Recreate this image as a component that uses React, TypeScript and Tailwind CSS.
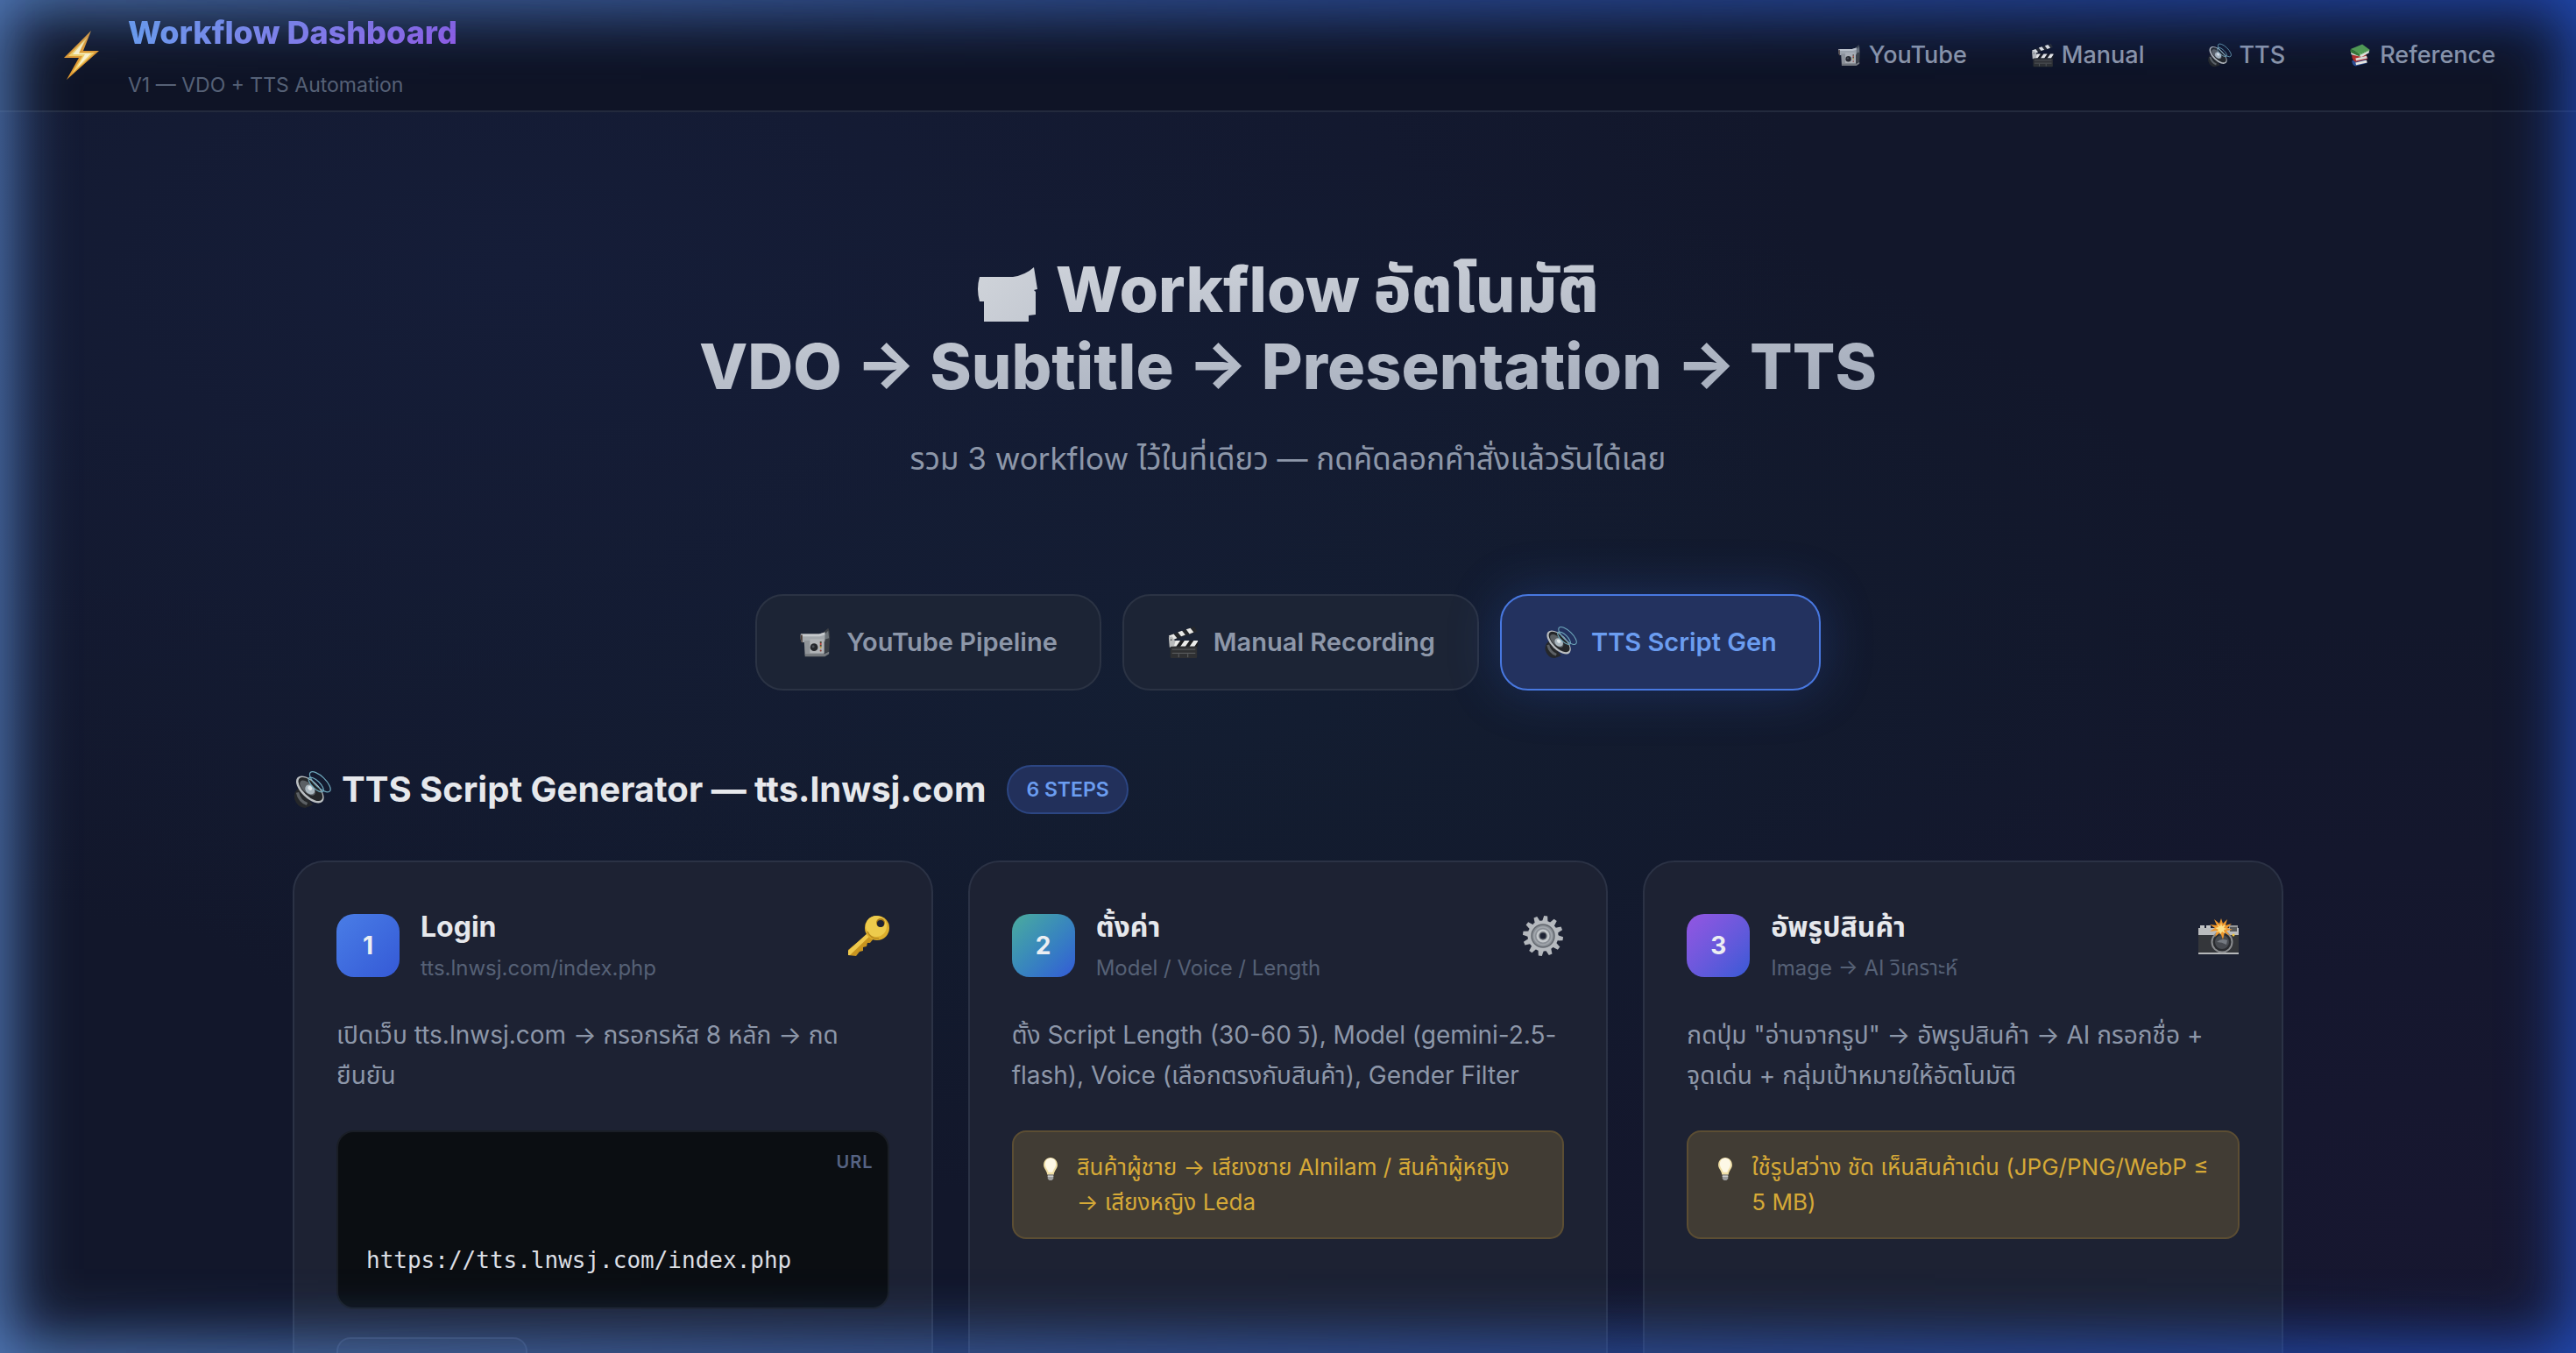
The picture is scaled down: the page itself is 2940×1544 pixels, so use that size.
import React, { useState } from 'react';

type IconProps = { className?: string };

const Camcorder = ({ className }: IconProps) => (
  <svg viewBox="0 0 40 40" className={className} aria-hidden="true">
    <path d="M27 10 35 3q2 4 2 11l-1 17-8 3z" fill="#3b3f44" />
    <path d="M29 12 35 6l1 9-7 2z" fill="#6d7378" />
    <path d="M2 10h22l7-2v11l-6 1H3q-2-4-1-10z" fill="#a3a8ac" />
    <path d="M2 10h22l7-2v3l-6 2H2z" fill="#c5c9cc" />
    <path d="M2 11h2v10l-1-1q-2-4-1-9z" fill="#4a3c36" />
    <path d="M6 18h24v17H7z" fill="#909498" />
    <path d="M13 16h17v17H13z" fill="#b0b3b6" />
    <path d="M7 34h23l6-3v3l-5 3H7z" fill="#75797d" />
    <circle cx="18" cy="26" r="4.600" fill="#24262a" />
    <circle cx="17" cy="25" r="1.600" fill="#4b4f57" />
    <path d="M25 19h2v2h-2zM25 23h2v2h-2z" fill="#4e4733" />
    <circle cx="26" cy="22" r="1.100" fill="#b9433b" />
    <circle cx="26" cy="26" r="1.100" fill="#c79b35" />
    <circle cx="26" cy="30" r="1.100" fill="#8a3730" />
  </svg>
);

const CamcorderShape = ({ className }: IconProps) => (
  <svg viewBox="0 0 68 62" className={className} aria-hidden="true">
    <defs>
      <linearGradient id="shape" x1="0" y1="0" x2="1" y2="1">
        <stop offset="0" stopColor="#d0d4da" />
        <stop offset="1" stopColor="#c4c9d2" />
      </linearGradient>
    </defs>
    <path d="M2 11h38q14-2 24-11l4 25-4 1 2 2v26l-8 1v7H7V39H2q-4-14 0-28z" fill="url(#shape)" />
  </svg>
);

const Clapper = ({ className }: IconProps) => (
  <svg viewBox="0 0 40 40" className={className} aria-hidden="true">
    <path d="M3 12 34 1l3 6L6 18z" fill="#25272a" />
    <path d="m3 12 6-2 4 5-7 3zM14 8l5-2 4 5-5 2zM24 4.500l5-1.500 4 5-5 2z" fill="#e8e8e6" />
    <path d="M4 18h34v7H4z" fill="#1c1d1f" />
    <path d="m11 18 6 0-5 7H6zM22 18h6l-5 7h-6zM33 18h5v1l-4 6h-6z" fill="#ececea" />
    <path d="M3 14l4-1 4 6-2 7H4z" fill="#b9bbbb" />
    <circle cx="6" cy="17" r="1" fill="#55585a" />
    <rect x="5" y="25" width="32" height="14" rx="1.500" fill="#2f3032" />
    <path d="M7 28.500h28M7 33h28" stroke="#626466" strokeWidth="1" />
    <path d="M15 34v4M26 34v4" stroke="#626466" strokeWidth="1" />
  </svg>
);

const Speaker = ({ className }: IconProps) => (
  <svg viewBox="0 0 40 40" className={className} aria-hidden="true">
    <path d="M7 18q-7 5-5 12 3 9 11 9l8-3z" fill="#25272a" />
    <path d="M5 23q2 9 10 12" fill="none" stroke="#5c6064" strokeWidth="3" />
    <g transform="rotate(44 18 20)">
      <ellipse cx="18" cy="20" rx="18" ry="9" fill="#b9bdc0" />
      <ellipse cx="18" cy="19.300" rx="16" ry="7.300" fill="#242629" />
      <ellipse cx="15" cy="20.500" rx="10" ry="5" fill="#5b6064" />
      <ellipse cx="18" cy="20" rx="5.500" ry="4.500" fill="#aab7bf" />
      <ellipse cx="17" cy="19" rx="2.500" ry="2" fill="#dfe7ea" />
      <g fill="none" stroke="#6fa9bd" strokeWidth="1.100">
        <ellipse cx="19" cy="12" rx="10" ry="4" />
        <ellipse cx="20" cy="7" rx="14" ry="5.500" />
      </g>
    </g>
  </svg>
);

const Books = ({ className }: IconProps) => (
  <svg viewBox="0 0 40 40" className={className} aria-hidden="true">
    <path d="m6 29 21-4 4 8-19 5q-6-2-6-9z" fill="#2c4e91" />
    <path d="m12 32 18-4 1 4-18 4z" fill="#ece9e0" />
    <path d="m6 20 22-3 4 9-20 5q-6-3-6-11z" fill="#b62f27" />
    <path d="m12 25 18-4 1 4-18 4z" fill="#e4e1d8" />
    <path d="M4 13 22 17l12-6v5L22 23 5 19z" fill="#e9e8dd" />
    <path d="M4 10 23 2l12 9-16 7z" fill="#54a04a" />
    <path d="m4 10 15 8v4L5 16q-3-3-1-6z" fill="#37782f" />
    <path d="m19 18 16-7v1l-16 8z" fill="#6cba5e" />
  </svg>
);

const Bolt = ({ className }: IconProps) => (
  <svg viewBox="0 0 42 58" className={className} aria-hidden="true">
    <path d="M32 1 1 32h17L4 57 41 24H23z" fill="#e49a2e" />
    <path d="M28 8 6 30h16L10 50 36 26H18z" fill="#f6d468" />
    <path d="M24 13 11 28h14l-9 15 16-16H18z" fill="#fff6cf" />
  </svg>
);

const KeyIcon = ({ className }: IconProps) => (
  <svg viewBox="0 0 48 48" className={className} aria-hidden="true">
    <path d="m25 20 6 6-5 6-3 0-1 4-4 1 0 4-4 1-4 5-9-1v-6z" fill="#c8941f" />
    <path d="m24 20 3 3L3 46H1v-5z" fill="#efc94d" />
    <circle cx="34" cy="15" r="14" fill="#dcae2c" />
    <circle cx="33" cy="13" r="12" fill="#edcb4c" />
    <circle cx="38" cy="9" r="5" fill="#a87a18" />
    <circle cx="38" cy="10" r="4" fill="#1e2334" />
    <path d="M23 19q4 9 13 8" fill="none" stroke="#b98a1e" strokeWidth="1.500" />
  </svg>
);

const teeth = [0, 30, 60, 90, 120, 150, 180, 210, 240, 270, 300, 330];

const Gear = ({ className }: IconProps) => (
  <svg viewBox="0 0 48 48" className={className} aria-hidden="true">
    {teeth.map((a) => (
      <path key={a} d="M20.500 9 22 1h4l1.500 8z" fill="#b4b8bd" transform={`rotate(${a + 8} 24 24)`} />
    ))}
    <circle cx="24" cy="24" r="17.500" fill="#b6babf" />
    <circle cx="24" cy="24" r="13" fill="#8a8f96" stroke="#646970" strokeWidth="1.500" />
    <circle cx="24" cy="24" r="10" fill="none" stroke="#a2a7ad" strokeWidth="1.500" />
    <circle cx="24" cy="24" r="7.500" fill="#c3c7cb" />
    <circle cx="24" cy="24" r="4" fill="#1e2334" stroke="#5d626a" strokeWidth="1.500" />
  </svg>
);

const FlashCamera = ({ className }: IconProps) => (
  <svg viewBox="0 0 48 48" className={className} aria-hidden="true">
    <path d="M3 12h5v4H3zM10 12h5v4h-5z" fill="#c2c4c6" />
    <path d="M36 12h10v6H36z" fill="#96989a" />
    <rect x="1" y="15" width="46" height="30" rx="1.500" fill="#34363a" />
    <path d="M1 15h46v8H1z" fill="#babcbe" />
    <path d="M37 14h8v5h-8z" fill="#56585a" />
    <path d="M1 43h46v2H1z" fill="#b5b7b9" />
    <circle cx="41" cy="23" r="1.500" fill="#f0c63c" />
    <circle cx="28" cy="31" r="12.500" fill="#8a8c8f" />
    <circle cx="28" cy="31" r="10.500" fill="#2a2c30" />
    <circle cx="28" cy="31" r="8" fill="#484b51" />
    <path d="M22 31q5-5 12-2l-1 5q-5-3-11-3z" fill="#757a81" />
    <path d="m27 4 2 6 5-5-2 7 7-2-5 5 6 2-7 1 4 6-6-4-2 8-3-8-6 5 2-7-8 1 6-4-6-4 8 1-3-7 6 5z" fill="#ee972c" />
    <path d="m27 9 1 4 4-2-2 4 4 1-4 1 1 4-3-2-2 4-1-4-4 1 3-3-4-2 4-1-1-3 3 2z" fill="#fbe08a" />
  </svg>
);

const Bulb = ({ className }: IconProps) => (
  <svg viewBox="0 0 26 30" className={className} aria-hidden="true">
    <path d="M13 1c5 0 8.500 4 8.500 9 0 5-4 7-4.500 12H9C8.500 17 4.500 15 4.500 10 4.500 5 8 1 13 1z" fill="#f0dfa6" />
    <path d="M13 2c4 0 6.500 3 6.500 7 0 4-3 6-4 10h-5c-1-4-4-6-4-10 0-4 2.500-7 6.500-7z" fill="#fdf8e6" />
    <path d="M9.500 22h7v5l-2 2h-3l-2-2z" fill="#9b9c9c" />
    <path d="M9.500 24h7" stroke="#d4d5d5" strokeWidth="1" />
  </svg>
);

const navLinks = [
  { label: 'YouTube', href: '#youtube', Icon: Camcorder },
  { label: 'Manual', href: '#manual', Icon: Clapper },
  { label: 'TTS', href: '#tts', Icon: Speaker },
  { label: 'Reference', href: '#reference', Icon: Books },
];

const tabs = [
  { id: 'youtube', label: 'YouTube Pipeline', Icon: Camcorder },
  { id: 'manual', label: 'Manual Recording', Icon: Clapper },
  { id: 'tts', label: 'TTS Script Gen', Icon: Speaker },
];

type Step = {
  title: string;
  sub: string;
  text: string;
  tip?: string;
  url?: string;
  badge: string;
  Icon: React.FC<IconProps>;
};

const steps: Step[] = [
  {
    title: 'Login',
    sub: 'tts.lnwsj.com/index.php',
    text: 'เปิดเว็บ tts.lnwsj.com → กรอกรหัส 8 หลัก → กด\nยืนยัน',
    url: 'https://tts.lnwsj.com/index.php',
    badge: 'from-[#4a7de6] to-[#3559d6]',
    Icon: KeyIcon,
  },
  {
    title: 'ตั้งค่า',
    sub: 'Model / Voice / Length',
    text: 'ตั้ง Script Length (30-60 วิ), Model (gemini-2.5-flash), Voice (เลือกตรงกับสินค้า), Gender Filter',
    tip: 'สินค้าผู้ชาย → เสียงชาย Alnilam / สินค้าผู้หญิง\n→ เสียงหญิง Leda',
    badge: 'from-[#4cac9c] to-[#3559d6]',
    Icon: Gear,
  },
  {
    title: 'อัพรูปสินค้า',
    sub: 'Image → AI วิเคราะห์',
    text: 'กดปุ่ม "อ่านจากรูป" → อัพรูปสินค้า → AI กรอกชื่อ +\nจุดเด่น + กลุ่มเป้าหมายให้อัตโนมัติ',
    tip: 'ใช้รูปสว่าง ชัด เห็นสินค้าเด่น (JPG/PNG/WebP ≤\n5 MB)',
    badge: 'from-[#9455e2] to-[#3559d6]',
    Icon: FlashCamera,
  },
];

// Blue light that bleeds in from the window edges, paler on the left
const EdgeGlow = () => (
  <div className="pointer-events-none absolute inset-0 z-20">
    <div className="absolute inset-0 shadow-[inset_0_0_70px_12px_rgba(98,148,222,0.8)] [mask-image:linear-gradient(to_right,black,transparent)]" />
    <div className="absolute inset-0 shadow-[inset_0_0_70px_12px_rgba(37,84,205,0.85)] [mask-image:linear-gradient(to_left,black,transparent)]" />
  </div>
);

const StepCard = ({ step, index }: { step: Step; index: number }) => {
  const { Icon } = step;
  return (
    <article className="rounded-[36px] border-2 border-[#2b3245] bg-[#1d2233] px-12 pt-12 pb-16">
      <header className="flex items-center gap-6">
        <div className={`flex size-18 shrink-0 items-center justify-center rounded-[20px] bg-linear-to-br text-[28px] font-bold text-[#eceef2] ${step.badge}`}>
          {index + 1}
        </div>
        <div className="grow">
          <h3 className="text-[32px] leading-[52px] font-bold text-[#e6e8ec]">{step.title}</h3>
          <p className="text-2xl leading-[42px] text-[#566176]">{step.sub}</p>
        </div>
        <Icon className="mt-3 size-12 shrink-0 self-start" />
      </header>
      <p className="mt-8 text-[28px] leading-[46px] whitespace-pre-line text-[#8d97a9]">{step.text}</p>
      {step.tip && (
        <div className="mt-10 flex items-start gap-4 rounded-2xl border-2 border-[#5c4e33] bg-[#413c34] px-7 py-5 text-[26px] leading-10 text-[#d6a937]">
          <Bulb className="mt-2 h-7 w-7 shrink-0" />
          <p className="whitespace-pre-line">{step.tip}</p>
        </div>
      )}
      {step.url && (
        <>
          <div className="mt-10 rounded-[20px] border-2 border-[#1a1e26] bg-[#0b0e12] pt-3 pb-8">
            <p className="pr-4 text-right text-xl leading-11 font-semibold tracking-wider text-[#566383]">URL</p>
            <pre className="px-8 pt-17 font-['DejaVu_Sans_Mono',monospace] text-[26px] leading-11 text-[#dcdfe4]">{step.url}</pre>
          </div>
          <button className="mt-8 h-24 w-[218px] rounded-2xl border-2 border-[#343c52] bg-[#232a3d] text-2xl text-[#8d97a9]">คัดลอก</button>
        </>
      )}
    </article>
  );
};

const App: React.FC = () => {
  const [active, setActive] = useState('tts');

  return (
    <div className="relative h-screen overflow-hidden bg-[#12172b] bg-[radial-gradient(ellipse_at_20%_20%,#151d38_0%,transparent_45%),radial-gradient(ellipse_at_45%_50%,#131e31_0%,transparent_55%),radial-gradient(ellipse_at_95%_90%,#171730_0%,transparent_35%)] font-['Inter','Noto_Sans_Thai',sans-serif]">
      <header className="flex h-32 items-center justify-between border-b-2 border-[#232a3d] bg-[#0f1426] px-16">
        <a href="#top" className="flex items-center gap-8">
          <Bolt className="ml-2 h-[58px] w-[42px]" />
          <span className="flex flex-col pt-2">
            <span className="bg-linear-to-r from-[#6c9df0] to-[#9457e6] bg-clip-text text-4xl leading-[60px] font-extrabold text-transparent">Workflow Dashboard</span>
            <span className="text-[23px] leading-[60px] text-[#566176]">V1 — VDO + TTS Automation</span>
          </span>
        </a>
        <nav className="flex gap-4">
          {navLinks.map(({ label, href, Icon }) => (
            <a key={label} href={href} className="flex items-center gap-2 px-7 text-[27px] font-medium text-[#8d97a9]">
              <Icon className="size-7" />
              {label}
            </a>
          ))}
        </nav>
      </header>

      <main className="mx-auto max-w-[2400px] px-16">
        <section className="pt-[158px] text-center">
          <h1 className="bg-linear-to-br from-[#dde0e5] to-[#9aa3b4] bg-clip-text text-7xl leading-[88px] font-extrabold text-transparent">
            <CamcorderShape className="mr-5 inline h-[62px] w-[70px]" />
            Workflow อัตโนมัติ
            <br />
            VDO → Subtitle → Presentation → TTS
          </h1>
          <p className="mt-8 text-[35px] leading-[58px] text-[#8d97a9]">รวม 3 workflow ไว้ในที่เดียว — กดคัดลอกคำสั่งแล้วรันได้เลย</p>
        </section>

        <div role="tablist" className="mt-[126px] flex justify-center gap-6">
          {tabs.map(({ id, label, Icon }) => (
            <button
              key={id}
              role="tab"
              aria-selected={active === id}
              onClick={() => setActive(id)}
              className={`flex h-[110px] items-center gap-4 rounded-[32px] border-2 px-12 text-[29px] font-semibold ${
                active === id
                  ? 'border-[#4878e0] bg-[#23325f] text-[#6b9df0] shadow-[0_0_60px_rgba(59,110,230,0.25)]'
                  : 'border-[#2b3344] bg-[#1c2435] text-[#8d97a9]'
              }`}
            >
              <Icon className="size-[38px]" />
              {label}
            </button>
          ))}
        </div>

        <section className="mt-[77px]">
          <div className="flex items-center gap-6">
            <h2 className="flex items-center gap-3 text-[40px] leading-[72px] font-bold text-[#e6e8ec]">
              <Speaker className="size-11" />
              TTS Script Generator — tts.lnwsj.com
            </h2>
            <span className="rounded-full border-2 border-[#2c4683] bg-[#22305b] px-5 text-[23px] leading-[52px] font-semibold text-[#6b9df0]">6 STEPS</span>
          </div>
          <div className="mt-[45px] grid grid-cols-3 gap-10">
            {steps.map((step, i) => (
              <StepCard key={step.title} step={step} index={i} />
            ))}
          </div>
        </section>
      </main>
      <EdgeGlow />
    </div>
  );
};

export default App;
